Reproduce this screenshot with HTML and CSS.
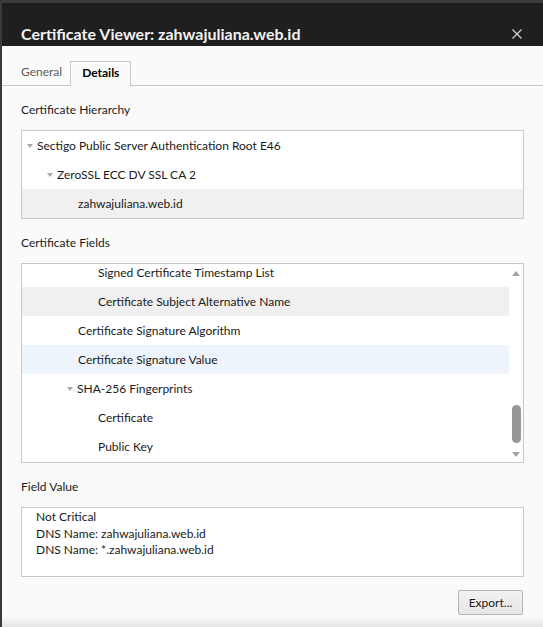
FILE: index.html
```html
<!DOCTYPE html>
<html lang="en">

<head>
  <meta charset="UTF-8">
  <meta name="viewport" content="width=device-width, initial-scale=1.0">
  <title>Certificate Viewer</title>
  <link rel="stylesheet" href="styles.css">
</head>

<body>
  <div class="window">
    <!-- title bar -->
    <div class="titlebar">
      <span class="title">Certificate Viewer: zahwajuliana.web.id</span>
      <svg class="close" width="10" height="10" viewBox="0 0 10 10">
        <path d="M0.5 0.5 L9.5 9.5 M9.5 0.5 L0.5 9.5" stroke="#d0d0d0" stroke-width="1.3" fill="none" />
      </svg>
    </div>

    <div class="content">
      <div class="tabs">
        <span class="tab">General</span>
        <span class="tab active">Details</span>
      </div>

      <div class="label">Certificate Hierarchy</div>
      <div class="box tree hierarchy">
        <div class="row lvl0"><span class="twisty"></span>Sectigo Public Server Authentication Root E46</div>
        <div class="row lvl1"><span class="twisty"></span>ZeroSSL ECC DV SSL CA 2</div>
        <div class="row lvl2 selected">zahwajuliana.web.id</div>
      </div>

      <div class="label">Certificate Fields</div>
      <div class="box fields">
        <div class="tree list">
          <div class="row lvl3 first">Signed Certificate Timestamp List</div>
          <div class="row lvl3 selected">Certificate Subject Alternative Name</div>
          <div class="row lvl2">Certificate Signature Algorithm</div>
          <div class="row lvl2 hover">Certificate Signature Value</div>
          <div class="row lvl2"><span class="twisty"></span>SHA-256 Fingerprints</div>
          <div class="row lvl3">Certificate</div>
          <div class="row lvl3">Public Key</div>
        </div>
        <div class="scrollbar">
          <span class="arrow up"></span>
          <div class="track"><span class="thumb"></span></div>
          <span class="arrow down"></span>
        </div>
      </div>

      <div class="label">Field Value</div>
      <div class="box value">
        <div>Not Critical</div>
        <div>DNS Name: zahwajuliana.web.id</div>
        <div>DNS Name: *.zahwajuliana.web.id</div>
      </div>

      <div class="actions">
        <button class="btn">Export...</button>
      </div>
    </div>
    <div class="bottom-shade"></div>
  </div>
</body>

</html>
```

FILE: styles.css
```css
html,
body {
  margin: 0;
  padding: 0;
  height: 100%;
}

body {
  font-family: "Segoe UI", Lato, "Noto Sans", sans-serif;
  font-size: 12px;
  color: #1a1a1a;
  background-color: #fafafa;
}

.window {
  height: 100%;
  display: flex;
  flex-direction: column;
  border-left: 2px solid #3a3a3a;
  box-sizing: border-box;
}

/* title bar */
.titlebar {
  height: 46px;
  flex-shrink: 0;
  border-top: 3px solid #3c3c3c;
  background-color: #1f1f1f;
  display: flex;
  align-items: flex-end;
  padding: 0 21px 2px 19px;
  box-sizing: border-box;
}

.title {
  flex: 1;
  color: #f2f2f2;
  font-size: 16px;
  font-weight: 700;
  line-height: 20px;
}

.close {
  margin-bottom: 5px;
}

.content {
  flex: 1;
  padding: 0 19px;
}

/* tabs */
.tabs {
  height: 39px;
  display: flex;
  align-items: flex-end;
  border-bottom: 1px solid #c9c9c9;
  margin: 0 -19px;
  padding: 0 19px;
}

.tab {
  height: 24px;
  line-height: 22px;
  padding: 0 11px;
  color: #5a5a5a;
  box-sizing: border-box;
}

.tabs .tab:first-child {
  padding-left: 0;
  padding-right: 8px;
}

.tab.active {
  color: #000;
  font-weight: 700;
  border: 1px solid #c9c9c9;
  border-bottom: none;
  background-color: #fafafa;
  margin-bottom: -1px;
  height: 25px;
}

.label {
  line-height: 16px;
  margin: 16px 0 12px;
}

.box {
  background-color: #fff;
  border: 1px solid #c9c9c9;
}

/* tree rows */
.row {
  height: 29px;
  display: flex;
  align-items: center;
  white-space: nowrap;
}

.lvl0 { padding-left: 16px; }
.lvl1 { padding-left: 36px; }
.lvl2 { padding-left: 56px; }
.lvl3 { padding-left: 76px; }

.twisty {
  width: 0;
  height: 0;
  border-left: 3.5px solid transparent;
  border-right: 3.5px solid transparent;
  border-top: 4px solid #a8a8a8;
  margin-left: -11px;
  margin-right: 4px;
}

.row.selected {
  background-color: #f0f0f0;
}

.row.hover {
  background-color: #eef4fb;
}

.fields {
  height: 198px;
  display: flex;
  overflow: hidden;
}

.list {
  flex: 1;
  overflow: hidden;
}

.list .first {
  margin-top: -6px;
}

/* scrollbar */
.scrollbar {
  width: 14px;
  display: flex;
  flex-direction: column;
  align-items: center;
  padding: 7px 0 5px;
  box-sizing: border-box;
}

.arrow {
  width: 0;
  height: 0;
  border-left: 4.5px solid transparent;
  border-right: 4.5px solid transparent;
}

.arrow.up {
  border-bottom: 5px solid #a3a3a3;
}

.arrow.down {
  border-top: 5px solid #a3a3a3;
}

.track {
  flex: 1;
  display: flex;
  flex-direction: column;
  justify-content: flex-end;
}

.thumb {
  width: 9px;
  height: 38px;
  border-radius: 5px;
  background-color: #989898;
  margin-bottom: 9px;
}

.value {
  height: 67px;
  padding: 1px 14px 0;
  line-height: 16.5px;
}

.actions {
  display: flex;
  justify-content: flex-end;
  margin-top: 13px;
}

.btn {
  font-family: inherit;
  font-size: 12px;
  color: #1a1a1a;
  width: 65px;
  height: 25px;
  padding: 0;
  margin-right: 1px;
  border: 1px solid #b4b4b4;
  border-radius: 2px;
  background: linear-gradient(#f2f2f2, #e6e6e6);
}

.bottom-shade {
  height: 11px;
  flex-shrink: 0;
  background: linear-gradient(#fafafa, #e4e4e4);
}
```
